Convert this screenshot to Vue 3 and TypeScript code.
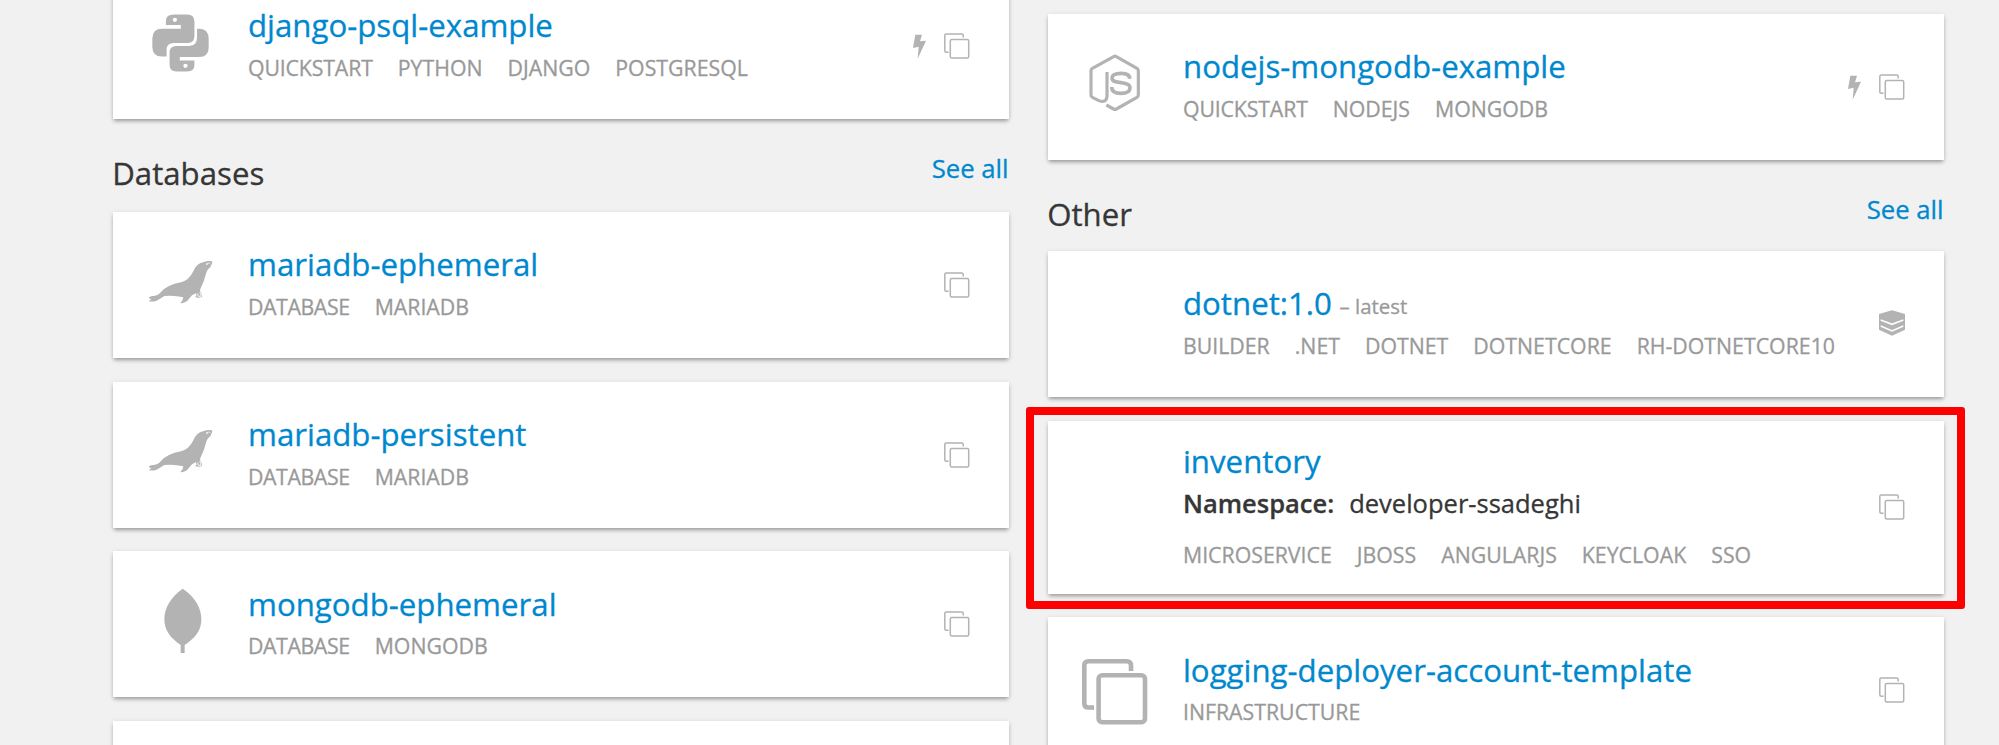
<script setup lang="ts">
type IconName = 'python' | 'nodejs' | 'mariadb' | 'mongodb' | 'template'
type Badge = 'bolt' | 'copy' | 'layers'

interface CatalogItem {
  name: string
  icon?: IconName
  note?: string
  namespace?: string
  tags: string[]
  badges: Badge[]
  highlighted?: boolean
}

interface Section {
  title?: string
  items: CatalogItem[]
}

interface Column {
  id: string
  sections: Section[]
}

const columns: Column[] = [
  {
    id: 'left',
    sections: [
      {
        items: [
          { name: 'django-psql-example', icon: 'python', tags: ['quickstart', 'python', 'django', 'postgresql'], badges: ['bolt', 'copy'] },
        ],
      },
      {
        title: 'Databases',
        items: [
          { name: 'mariadb-ephemeral', icon: 'mariadb', tags: ['database', 'mariadb'], badges: ['copy'] },
          { name: 'mariadb-persistent', icon: 'mariadb', tags: ['database', 'mariadb'], badges: ['copy'] },
          { name: 'mongodb-ephemeral', icon: 'mongodb', tags: ['database', 'mongodb'], badges: ['copy'] },
          { name: '', tags: [], badges: [] },
        ],
      },
    ],
  },
  {
    id: 'right',
    sections: [
      {
        items: [
          { name: 'nodejs-mongodb-example', icon: 'nodejs', tags: ['quickstart', 'nodejs', 'mongodb'], badges: ['bolt', 'copy'] },
        ],
      },
      {
        title: 'Other',
        items: [
          { name: 'dotnet:1.0', note: '– latest', tags: ['builder', '.net', 'dotnet', 'dotnetcore', 'rh-dotnetcore10'], badges: ['layers'] },
          {
            name: 'inventory',
            namespace: 'developer-ssadeghi',
            tags: ['microservice', 'jboss', 'angularjs', 'keycloak', 'sso'],
            badges: ['copy'],
            highlighted: true,
          },
          { name: 'logging-deployer-account-template', icon: 'template', tags: ['infrastructure'], badges: ['copy'] },
        ],
      },
    ],
  },
]
</script>

<template>
  <main class="catalog">
    <div v-for="column in columns" :key="column.id" class="column" :class="column.id">
      <section v-for="(section, s) in column.sections" :key="s">
        <header v-if="section.title" class="section-head">
          <h2>{{ section.title }}</h2>
          <a class="see-all">See all</a>
        </header>
        <div class="cards">
          <article
            v-for="(item, i) in section.items"
            :key="i"
            class="card"
            :class="{ tall: item.namespace }"
          >
            <div class="icon">
              <svg v-if="item.icon === 'python'" width="57" height="58" viewBox="156 40 172 174">
                <g fill="#b3b3b3">
                  <path d="M198 73V60Q198 41 222 41H262Q284 41 284 62V107Q284 127 264 127H222Q200 127 200 147V168H186Q157 168 157 138V114Q157 84 186 84H243V73Z" />
                  <path d="M284 180V193Q284 213 262 213H230Q209 213 209 192V156Q209 136 230 136H268Q292 136 292 110V84H300Q327 86 327 114V140Q327 156 318 163Q313 169 298 169H240V180Z" />
                </g>
                <circle cx="225" cy="57" r="6.5" fill="#fff" />
                <circle cx="257" cy="196" r="6.5" fill="#fff" />
              </svg>
              <svg v-else-if="item.icon === 'nodejs'" class="nudge-up" width="52" height="58" viewBox="628 162 156 174" fill="none" stroke="#b3b3b3" stroke-linejoin="round">
                <path stroke-width="9.5" d="M680 315L702 327Q706 329 710 327L772 292Q776 290 776 285V212Q776 208 772 205L710 170Q706 167 702 170L638 205Q634 208 634 212V285Q634 290 638 292L656 301Q682 312 682 286V216" />
                <path stroke-width="11" d="M750 236C750 225 742 220 725 220C707 220 697 224 697 234C697 244 707 246 724 248C741 250 751 253 751 263C751 275 742 280 724 280C706 280 696 274 696 261" />
              </svg>
              <svg v-else-if="item.icon === 'mariadb'" width="66" height="44" viewBox="141 88 198 132">
                <path fill="#b3b3b3" d="M143 201Q147 195 158 196Q172 195 180 184Q198 163 240 155Q264 149 277 122Q287 98 306 95Q318 90 331 91Q336 94 333 99Q328 104 329 109Q318 116 314 132Q309 153 301 168Q295 178 298 184Q305 194 303 199Q294 203 283 200Q283 196 287 195L284 188Q272 192 264 204Q256 217 238 218Q247 208 247 200Q220 193 190 196Q175 206 165 211Q155 214 144 212Q146 207 152 206Q146 205 143 201Z" />
                <path fill="none" stroke="#fff" stroke-width="3" d="M288 188Q294 192 291 198M296 185Q301 191 300 197H294" />
                <path fill="none" stroke="#fff" stroke-width="2" d="M315 100Q321 96 328 98" />
                <circle cx="318" cy="101" r="2.2" fill="#fff" />
              </svg>
              <svg v-else-if="item.icon === 'mongodb'" class="leaf" width="38" height="66" viewBox="190 144 114 198">
                <path fill="#b3b3b3" d="M246 146C284 172 302 204 302 237C302 271 286 292 252 315V339H240V315C208 292 191 271 191 237C191 204 210 172 246 146Z" />
              </svg>
              <svg v-else-if="item.icon === 'template'" class="big-template" width="66" height="66" viewBox="0 0 66 66" fill="none" stroke="#b3b3b3" stroke-width="4.6">
                <path d="M49 12V6.3Q49 2.3 45 2.3H6.3Q2.3 2.3 2.3 6.3V44.5Q2.3 48.5 6.3 48.5H12" />
                <rect x="16.6" y="16.2" width="46.4" height="47" rx="3.6" />
              </svg>
            </div>

            <div v-if="item.name" class="body">
              <h3>
                <a>{{ item.name }}</a>
                <small v-if="item.note">{{ item.note }}</small>
              </h3>
              <p v-if="item.namespace" class="namespace">
                <b>Namespace:</b><span>{{ item.namespace }}</span>
              </p>
              <ul class="tags">
                <li v-for="tag in item.tags" :key="tag" :class="'tag-' + tag.replace('.', '')">{{ tag }}</li>
              </ul>
            </div>

            <div class="badges">
              <template v-for="badge in item.badges" :key="badge">
                <svg v-if="badge === 'bolt'" width="13" height="25" viewBox="99 102 39 75">
                  <path fill="#b3b3b3" d="M106 104H126L120 124L138 122L113 176L116 140L99 144Z" />
                </svg>
                <svg v-else-if="badge === 'copy'" width="26" height="26" viewBox="0 0 26 26" fill="none" stroke="#b3b3b3" stroke-width="1.5">
                  <path d="M19.2 4.4V2.5Q19.2 1 17.7 1H2.3Q.8 1 .8 2.5V17.8Q.8 19.3 2.3 19.3H4.6" />
                  <rect x="6.3" y="6.6" width="18.4" height="18.4" rx="1.5" />
                </svg>
                <svg v-else class="layers" width="26" height="26" viewBox="957 148 78 78">
                  <path fill="#b3b3b3" d="M957 160L996 149L1035 160V207L996 225L957 207Z" />
                  <path fill="none" stroke="#fff" stroke-width="4.6" d="M962 178L996 191L1030 178M962 196L996 211L1030 196" />
                </svg>
              </template>
            </div>

            <div v-if="item.highlighted" class="highlight"></div>
          </article>
        </div>
      </section>
    </div>
  </main>
</template>

<style>
body {
  margin: 0;
  background: #f1f1f1;
}
</style>

<style scoped>
.catalog {
  display: flex;
  gap: 38.6px;
  box-sizing: border-box;
  width: 1999px;
  height: 745px;
  padding: 0 0 0 113px;
  overflow: hidden;
  background: #f1f1f1;
  color: #363636;
  font-family: 'Open Sans', sans-serif;
  -webkit-text-stroke: 0.3px currentColor;
}

.column {
  flex: none;
  width: 896.4px;
}

.column.left {
  margin-top: -27px;
}

.column.right {
  margin-top: 14px;
}

.section-head {
  display: flex;
  justify-content: space-between;
  height: 93px;
}

.right .section-head {
  height: 91px;
}

h2 {
  margin: 33.5px 0 0 -0.8px;
  font-size: 31.2px;
  font-weight: 400;
  line-height: 40px;
}

.see-all {
  margin: 32px 0.8px 0 0;
  font-size: 25.7px;
  line-height: 36px;
  color: #0088ce;
}

.cards {
  display: flex;
  flex-direction: column;
  gap: 23.7px;
}

.card {
  position: relative;
  display: flex;
  align-items: center;
  box-sizing: border-box;
  height: 146px;
  padding-right: 39.5px;
  background: #fff;
  box-shadow: 0 3px 4px -1px rgba(0, 0, 0, 0.3), 0 1px 5px rgba(0, 0, 0, 0.12);
}

.card.tall {
  height: 173px;
}

.icon {
  display: flex;
  flex: none;
  justify-content: center;
  width: 135px;
}

.icon svg {
  margin-top: -7px;
}

.icon .nudge-up {
  margin-top: -8px;
}

.icon .leaf {
  margin: -7px 0 0 4px;
}

.icon .big-template {
  margin-top: 4px;
}

.body {
  flex: 1;
  align-self: flex-start;
  padding-top: 32.3px;
}

.tall .body {
  padding-top: 20.2px;
}

h3 {
  display: flex;
  align-items: baseline;
  gap: 7.7px;
  height: 40px;
  margin: 0;
  font-size: 31.23px;
  font-weight: 400;
  line-height: 40px;
  color: #0088ce;
}

h3 small {
  font-size: 20.4px;
  line-height: 30px;
  color: #999;
  transform: translateY(-1px);
}

.namespace {
  display: flex;
  gap: 15px;
  margin: 4px 0 0;
  font-size: 25.5px;
  line-height: 36px;
}

.namespace b {
  font-weight: 600;
}

.tags {
  display: flex;
  gap: 25px;
  margin: 7.6px 0 0;
  padding: 0;
  list-style: none;
  font-size: 21.3px;
  line-height: 30px;
  text-transform: uppercase;
  white-space: nowrap;
  color: #999;
}

.namespace + .tags {
  margin-top: 19px;
}

.tag-quickstart {
  letter-spacing: -0.15px;
}

.tag-database {
  letter-spacing: -0.4px;
}

.badges {
  display: flex;
  flex: none;
  align-items: center;
  gap: 18px;
}

.card svg {
  display: block;
}

.badges .layers {
  margin-top: -3px;
}

.highlight {
  position: absolute;
  inset: -14px -20.6px -15px -22px;
  z-index: 1;
  border: 8px solid #f00;
  border-radius: 3px;
}
</style>
